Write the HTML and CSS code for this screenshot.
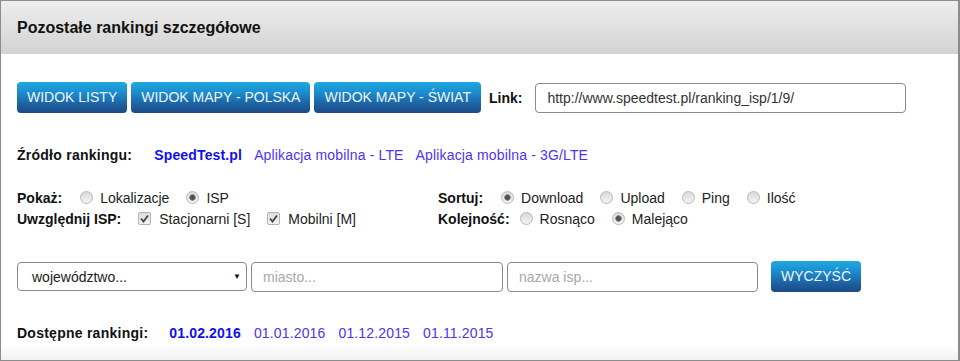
FILE: index.html
```html
<!DOCTYPE html>
<html lang="pl">
  <head>
    <meta charset="UTF-8" />
    <title>Pozostałe rankingi szczegółowe</title>
    <link rel="stylesheet" href="styles.css">
  </head>
  <body>
    <div class="panel">
      <div class="panel-header">Pozostałe rankingi szczegółowe</div>
      <div class="panel-body">
        <!-- view switch + link -->
        <div class="row view-row">
          <div class="btn-group">
            <a class="btn">WIDOK LISTY</a>
            <a class="btn">WIDOK MAPY - POLSKA</a>
            <a class="btn">WIDOK MAPY - ŚWIAT</a>
          </div>
          <span class="label link-label">Link:</span>
          <input class="field link-field" type="text" value="http://www.speedtest.pl/ranking_isp/1/9/">
        </div>

        <!-- source -->
        <div class="row source-row">
          <span class="label">Źródło rankingu:</span>
          <div class="link-list">
            <a class="src active">SpeedTest.pl</a>
            <a class="src">Aplikacja mobilna - LTE</a>
            <a class="src">Aplikacja mobilna - 3G/LTE</a>
          </div>
        </div>

        <!-- options -->
        <div class="options">
          <div class="opt-row">
            <span class="label">Pokaż:</span>
            <label class="choice"><span class="radio"></span>Lokalizacje</label>
            <label class="choice"><span class="radio checked"></span>ISP</label>
          </div>
          <div class="opt-row">
            <span class="label">Sortuj:</span>
            <label class="choice"><span class="radio checked"></span>Download</label>
            <label class="choice"><span class="radio"></span>Upload</label>
            <label class="choice"><span class="radio"></span>Ping</label>
            <label class="choice"><span class="radio"></span>Ilość</label>
          </div>
          <div class="opt-row">
            <span class="label label-isp">Uwzględnij ISP:</span>
            <label class="choice"><span class="check"><svg viewBox="0 0 13 13" width="13" height="13"><path d="M3 6.5 L5.5 9.5 L10 3.5" fill="none" stroke="#444" stroke-width="1.8"/></svg></span>Stacjonarni [S]</label>
            <label class="choice"><span class="check"><svg viewBox="0 0 13 13" width="13" height="13"><path d="M3 6.5 L5.5 9.5 L10 3.5" fill="none" stroke="#444" stroke-width="1.8"/></svg></span>Mobilni [M]</label>
          </div>
          <div class="opt-row">
            <span class="label label-order">Kolejność:</span>
            <label class="choice"><span class="radio"></span>Rosnąco</label>
            <label class="choice"><span class="radio checked"></span>Malejąco</label>
          </div>
        </div>

        <!-- filters -->
        <div class="row filter-row">
          <div class="select">
            <span>województwo...</span>
            <span class="arrow">▼</span>
          </div>
          <input class="field city-field" type="text" placeholder="miasto...">
          <input class="field isp-field" type="text" placeholder="nazwa isp...">
          <a class="btn clear-btn">WYCZYŚĆ</a>
        </div>

        <!-- dates -->
        <div class="row dates-row">
          <span class="label">Dostępne rankingi:</span>
          <div class="link-list">
            <a class="src active">01.02.2016</a>
            <a class="src">01.01.2016</a>
            <a class="src">01.12.2015</a>
            <a class="src">01.11.2015</a>
          </div>
        </div>
      </div>
    </div>
  </body>
</html>
```

FILE: styles.css
```css
body {
  font-family: "Liberation Sans", Arial, sans-serif;
  font-size: 14px;
  color: #222;
  margin: 0;
  padding: 0;
  background: #fff;
}
.panel {
  width: 957px;
  height: 359px;
  border: 1px solid #8c8c8c;
  border-right-width: 2px;
  background: linear-gradient(to bottom, #fff 0, #fff calc(100% - 16px), #f1f1f1 100%);
}
.panel-header {
  height: 53px;
  line-height: 53px;
  padding-left: 16px;
  font-size: 16px;
  font-weight: bold;
  color: #111;
  background: linear-gradient(to bottom, #ededed, #d3d3d3);
}
.panel-body {
  padding: 28px 16px 0 16px;
}
.row {
  display: flex;
  align-items: center;
}
.label {
  font-weight: bold;
  color: #111;
}
.btn-group {
  display: flex;
  gap: 4px;
}
.btn {
  display: inline-block;
  height: 31px;
  line-height: 31px;
  padding: 0 10px;
  color: #eef3fa;
  border-radius: 4px;
  background: linear-gradient(to bottom, #1fa9e2, #1b8ccc 35%, #1d5e9e 75%, #1c4b87);
  cursor: pointer;
}
.link-label {
  margin-left: 8px;
  margin-right: 13px;
}
.field {
  box-sizing: border-box;
  height: 30px;
  border: 1px solid #8a8a8a;
  border-radius: 4px;
  padding: 0 11px;
  font-family: "Liberation Sans", Arial, sans-serif;
  font-size: 14px;
  color: #333;
  background: #fff;
  outline: none;
}
.field::placeholder {
  color: #a9a9a9;
}
.link-field {
  width: 371px;
}
.source-row {
  margin-top: 32px;
  height: 20px;
}
.source-row .label,
.dates-row .label {
  letter-spacing: 0.25px;
}
.source-row .label {
  margin-right: 22px;
}
.link-list {
  display: flex;
  gap: 12px;
}
.src {
  color: #5231f4;
  letter-spacing: 0.15px;
  cursor: pointer;
}
.src.active {
  color: #1010ee;
  font-weight: bold;
}
.options {
  display: grid;
  grid-template-columns: 421px auto;
  margin-top: 22px;
}
.opt-row {
  display: flex;
  align-items: center;
  height: 21px;
}
.opt-row .label {
  margin-right: 18px;
}
.opt-row .label-isp {
  margin-right: 17px;
}
.opt-row .label-order {
  margin-right: 10px;
}
.choice {
  display: flex;
  align-items: center;
  margin-right: 17px;
  color: #222;
}
.radio {
  box-sizing: border-box;
  width: 13px;
  height: 13px;
  border-radius: 50%;
  border: 1px solid #b9b9b9;
  background: linear-gradient(to bottom, #d9d9d9, #f4f4f4);
  margin-right: 7px;
}
.radio.checked {
  background: radial-gradient(circle, #4a4a4a 0, #555 2px, #8a8a8a 3px, transparent 3.5px), linear-gradient(to bottom, #d9d9d9, #f4f4f4);
}
.check {
  box-sizing: border-box;
  width: 13px;
  height: 13px;
  border: 1px solid #b3b3b3;
  border-radius: 2px;
  background: linear-gradient(to bottom, #dcdcdc, #f4f4f4);
  margin-right: 8px;
  display: flex;
}
.check svg {
  margin: -1px;
}
.filter-row {
  margin-top: 32px;
  height: 31px;
  gap: 4px;
}
.select {
  box-sizing: border-box;
  width: 230px;
  height: 29px;
  border: 1px solid #8a8a8a;
  border-radius: 4px;
  padding: 0 5px 0 14px;
  display: flex;
  align-items: center;
  justify-content: space-between;
  color: #222;
}
.arrow {
  font-size: 8px;
  color: #111;
}
.city-field {
  width: 252px;
}
.isp-field {
  width: 251px;
}
.clear-btn {
  margin-left: 9px;
  padding: 0 10px;
}
.dates-row {
  margin-top: 31px;
  height: 20px;
}
.dates-row .label {
  margin-right: 21px;
}
.dates-row .link-list {
  gap: 13px;
}
```
